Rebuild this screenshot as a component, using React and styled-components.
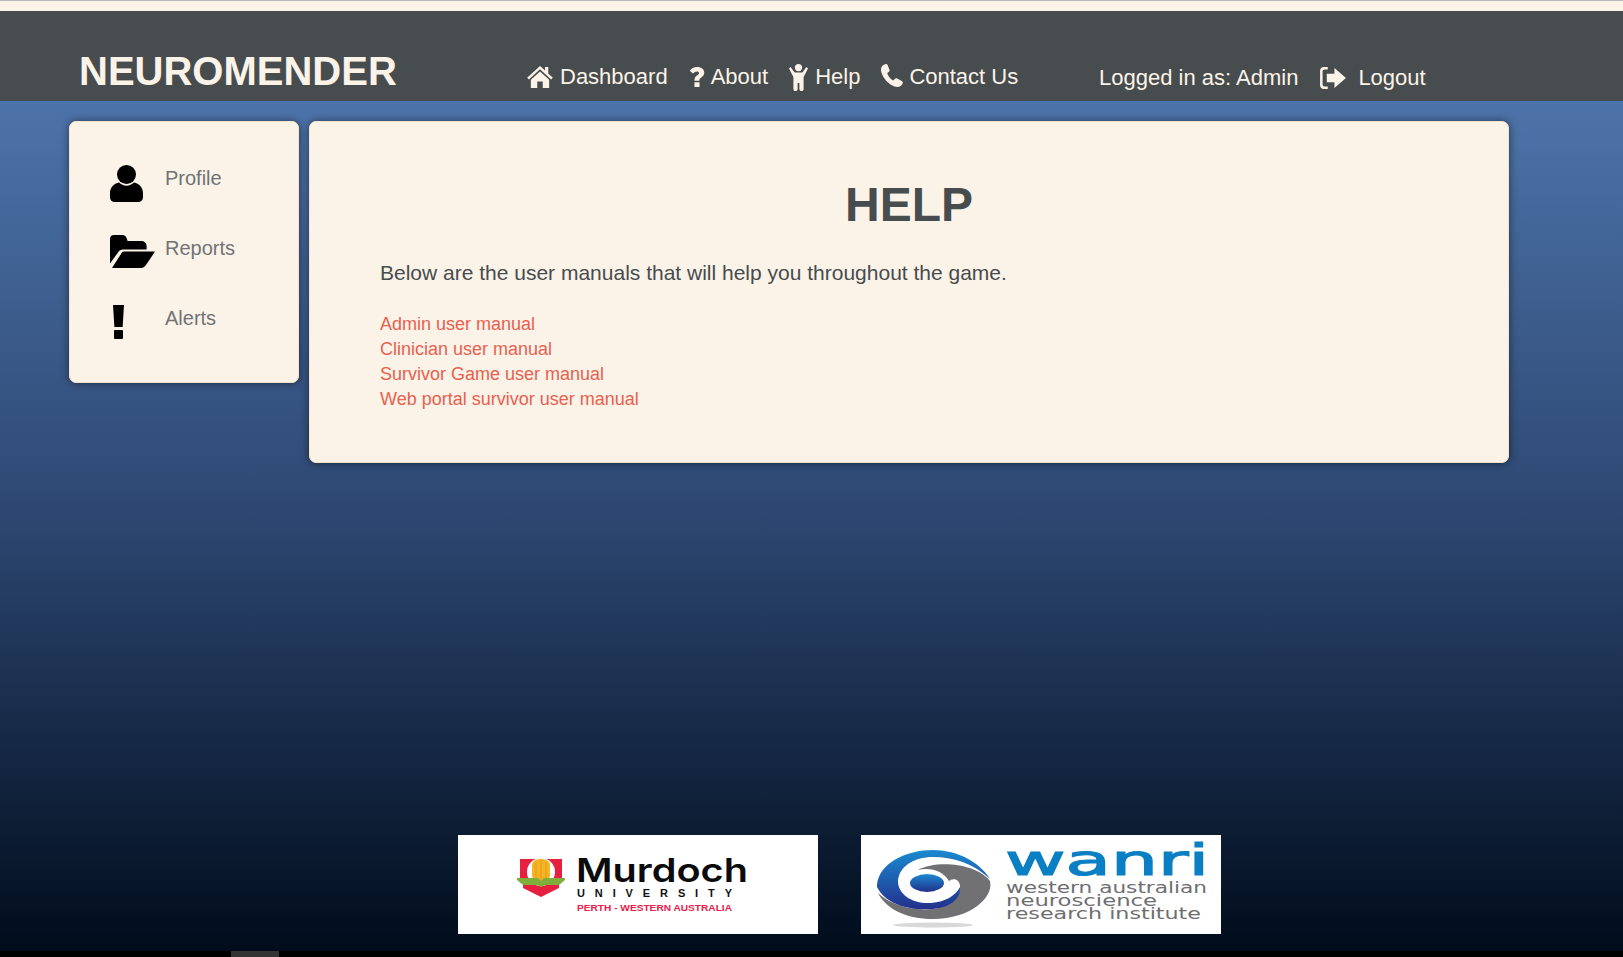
import React from "react";
import styled, { createGlobalStyle } from "styled-components";

const cream = "#fcf3e8";
const slate = "#474c4f";

const GlobalStyle = createGlobalStyle`
  html, body {
    margin: 0;
    padding: 0;
    background: #000;
  }
  body {
    font-family: "Liberation Sans", Arial, sans-serif;
  }
`;

const Page = styled.div`
  height: 957px;
  overflow: hidden;
  display: flex;
  flex-flow: column;
`;

const TopStrip = styled.div`
  height: 10px;
  flex: none;
  background: ${cream};
  border-top: 1px solid #b8b8b8;
`;

const Header = styled.header`
  height: 90px;
  flex: none;
  box-sizing: border-box;
  background: ${slate};
  color: ${cream};
  display: flex;
  align-items: flex-start;
  padding: 37px 0 0 79px;
`;

const Brand = styled.h1`
  width: 448px;
  margin: 0;
  font-size: 40px;
  line-height: 46px;
  font-weight: 700;
`;

const Nav = styled.nav`
  display: flex;
  width: 572px;
  padding-top: 16px;
`;

const NavLink = styled.a`
  display: flex;
  align-items: flex-start;
  gap: ${(p) => p.$gap}px;
  margin-right: ${(p) => p.$space}px;
  font-size: 22px;
  line-height: 25px;
  color: ${cream};
`;

const NavIcon = styled.span`
  margin-top: ${(p) => p.$top}px;
  line-height: 0;
`;

const Session = styled.div`
  display: flex;
  padding-top: 17px;
  font-size: 22px;
  line-height: 25px;
`;

const LogoutLink = styled.a`
  display: flex;
  gap: 12px;
  margin-left: 22px;
  color: ${cream};
`;

const Content = styled.main`
  flex: 1;
  display: flex;
  flex-flow: column;
  background: linear-gradient(180deg, #4d74aa 0%, #2c4670 50%, #000c1b 100%);
`;

const Columns = styled.div`
  display: flex;
  align-items: flex-start;
  gap: 10px;
  padding: 20px 0 0 69px;
`;

const Card = styled.section`
  box-sizing: border-box;
  background: ${cream};
  border: 1px solid #f9e2c8;
  border-radius: 7px;
  box-shadow: 0 0 8px rgba(0, 0, 0, 0.5);
`;

const Sidebar = styled(Card)`
  width: 230px;
  height: 262px;
  padding: 20px 0 0 40px;
`;

const SideItem = styled.a`
  display: flex;
  align-items: flex-start;
  height: 70px;
  font-size: 20px;
  line-height: 72px;
  color: #6f7377;
`;

const SideIcon = styled.span`
  width: 55px;
  flex: none;
  padding-top: 23px;
  line-height: 0;
`;

const MainCard = styled(Card)`
  width: 1200px;
  height: 342px;
  padding: 0 70px;
  color: ${slate};
`;

const Title = styled.h2`
  margin: 0;
  padding-top: 55px;
  font-size: 48px;
  line-height: 55px;
  font-weight: 700;
  text-align: center;
`;

const Intro = styled.p`
  margin: 0;
  padding-top: 29px;
  font-size: 21px;
  line-height: 24px;
`;

const Manuals = styled.ul`
  list-style: none;
  margin: 0;
  padding: 27px 0 0;
`;

const Manual = styled.li`
  font-size: 18px;
  line-height: 25px;
  color: #e9604f;
`;

const Footer = styled.footer`
  margin-top: auto;
  padding: 0 0 17px 458px;
  display: flex;
  gap: 43px;
`;

const LogoTile = styled.div`
  width: 360px;
  height: 99px;
  background: #fff;
  line-height: 0;
`;

const BottomBar = styled.div`
  height: 6px;
  flex: none;
  background: #000;
  padding-left: 231px;
`;

const BottomTab = styled.div`
  width: 48px;
  height: 6px;
  background: #333;
`;

const HomeIcon = () => (
  <svg width="26" height="22" viewBox="0 0 28 24" fill={cream}>
    <path d="M14 0 L19.5 5 V1 H23 V8.2 L28 12.8 L26.2 14.6 L14 3.6 L1.8 14.6 L0 12.8 Z" />
    <path d="M14 6 L24 15 V24 H17 V17 H11 V24 H4 V15 Z" />
  </svg>
);

const QuestionIcon = () => (
  <svg width="16" height="20" viewBox="0 0 16 22" fill={cream}>
    <path d="M8 0 C13 0 16 2.6 16 6.4 C16 9.4 14 10.7 12.4 11.8 C11 12.8 10.6 13.3 10.6 15 H5.2 C5.2 12 6.2 10.6 8 9.4 C9.4 8.4 10.2 7.9 10.2 6.7 C10.2 5.5 9.3 4.9 8 4.9 C6.4 4.9 5 5.8 3.6 7.2 L0 4 C2 1.4 4.6 0 8 0 Z" />
    <rect x="5.2" y="16.8" width="5.6" height="5.2" />
  </svg>
);

const PersonIcon = () => (
  <svg width="19" height="27" viewBox="0 0 19 27" fill={cream}>
    <circle cx="9.5" cy="3.6" r="3.6" />
    <path d="M1.6 3 L5.6 8.6 H13.4 L17.4 3 L19 4.4 L14.6 13 V25 C14.6 26.4 13.8 27 12.6 27 C11.4 27 10.4 26.4 10.4 25 V19 H8.6 V25 C8.6 26.4 7.6 27 6.4 27 C5.2 27 4.4 26.4 4.4 25 V13 L0 4.4 Z" />
  </svg>
);

const PhoneIcon = () => (
  <svg width="24" height="23" viewBox="0 0 24 25" fill={cream}>
    <path d="M5.4 0 C6.4 0 7 .6 7.4 1.6 L9.2 6.2 C9.6 7.2 9.2 8 8.4 8.6 L6.8 9.8 C7.4 12.6 10.4 16.6 13.4 18 L15 16.4 C15.8 15.6 16.6 15.4 17.6 15.8 L22.6 18.4 C23.6 19 24 19.8 23.6 20.8 C22.8 23.4 20.4 25 18 25 C9.4 24.6 0 13.4 0 6 C0 3.2 2 .6 4.4 .2 Z" />
  </svg>
);

const LogoutIcon = () => (
  <NavIcon $top={2}>
    <svg width="26" height="22" viewBox="0 0 27 23" fill={cream}>
      <path d="M8 0 V2.6 H4.6 C3.4 2.6 2.6 3.4 2.6 4.6 V18.4 C2.6 19.6 3.4 20.4 4.6 20.4 H8 V23 H4 C1.6 23 0 21.4 0 19 V4 C0 1.6 1.6 0 4 0 Z" />
      <path d="M15 1 L27 11.5 L15 22 V16 H7 V7 H15 Z" />
    </svg>
  </NavIcon>
);

const UserIcon = () => (
  <svg width="33" height="37" viewBox="0 0 33 37" fill="#000">
    <circle cx="16.5" cy="9.5" r="9.5" />
    <path d="M9 17.6 C11 19.6 13.6 20.8 16.5 20.8 C19.4 20.8 22 19.6 24 17.6 C29 18.6 33 22.6 33 28 V32 C33 35 31 37 28 37 H5 C2 37 0 35 0 32 V28 C0 22.6 4 18.6 9 17.6 Z" />
  </svg>
);

const FolderIcon = () => (
  <svg width="45" height="33" viewBox="0 0 45 33" fill="#000">
    <path d="M0 4 C0 1.6 1.6 0 4 0 H12 C15 0 16.6 1.6 17.6 6 H31 C34 6 36.6 8 36.6 11 V14.6 H13 C10.6 14.6 9.4 15.6 8 17.4 L0 28.6 Z" />
    <path d="M14 16.6 H45 L36 30 C34.6 32 33 33 31 33 H2 L11 19 C11.8 17.4 12.6 16.6 14 16.6 Z" />
  </svg>
);

const AlertIcon = () => (
  <svg width="14" height="34" viewBox="-3 0 14 34" fill="#000">
    <path d="M0 0 H11 L9.6 22 H1.4 Z" />
    <rect x="1" y="25" width="9" height="9" rx="1" />
  </svg>
);

const MurdochLogo = () => (
  <svg width="360" height="99" viewBox="0 0 360 99">
    <path d="M62 24 H104 V44 H62 Z" fill="#e8203f" />
    <path d="M65 50 H101 V53 L83 62 L65 53 Z" fill="#e8203f" />
    <circle cx="83" cy="37" r="14" fill="#fff" />
    <path d="M74 30 C74 22 92 22 92 30 V42 L83 48 L74 42 Z" fill="#f6b425" />
    <path d="M78 27 V44 M83 25 V46 M88 27 V44" stroke="#e39a1c" strokeWidth="1" />
    <path d="M59 43 H80 L83 46 L86 43 H107 V45 L101 50 H87 L83 52 L79 50 H65 L59 45 Z" fill="#7fae3c" />
    <text x="118" y="47" fontFamily="Inter, sans-serif" fontWeight="600" fontSize="33" textLength="172" lengthAdjust="spacingAndGlyphs" fill="#0b0b0b">Murdoch</text>
    <text x="119" y="62" fontFamily="Liberation Sans, sans-serif" fontWeight="700" fontSize="11" textLength="155" fill="#111">UNIVERSITY</text>
    <text x="119" y="76" fontFamily="Liberation Sans, sans-serif" fontWeight="700" fontSize="8.5" textLength="155" lengthAdjust="spacingAndGlyphs" fill="#e8204a">PERTH - WESTERN AUSTRALIA</text>
  </svg>
);

const WanriLogo = () => (
  <svg width="360" height="99" viewBox="0 0 360 99">
    <defs>
      <linearGradient id="swirl" x1="0" y1="0" x2="0" y2="1">
        <stop offset="0" stopColor="#1a8ad0" />
        <stop offset="1" stopColor="#23308c" />
      </linearGradient>
    </defs>
    <ellipse cx="72" cy="90" rx="40" ry="2.5" fill="#d8d8d8" />
    <path d="M57 35 C75 25 115 28 129 46 C133 62 110 84 72 84 C45 84 25 74 17 58 C30 70 50 76 72 74 C90 72 100 62 99 50 C97 42 90 44 88 46 C82 36 70 32 57 35 Z" fill="#717174" />
    <path d="M16 50 C18 28 45 15 72 15 C95 15 118 26 129 44 C112 28 92 22 72 22 C52 22 38 32 37 46 C37 60 52 69 70 68 C85 67 95 60 99 52 C100 62 92 72 72 74 C50 76 25 70 16 52 Z" fill="url(#swirl)" />
    <ellipse cx="66" cy="48" rx="17" ry="9" fill="url(#swirl)" />
    <text x="144" y="40" fontFamily="DejaVu Sans, sans-serif" fontSize="43" stroke="#0a7fc4" strokeWidth="1.2" textLength="204" lengthAdjust="spacingAndGlyphs" fill="#0a7fc4">wanri</text>
    <text x="145" y="58" fontFamily="DejaVu Sans, sans-serif" fontSize="16" textLength="201" lengthAdjust="spacingAndGlyphs" fill="#6e6e70">western australian</text>
    <text x="145" y="71" fontFamily="DejaVu Sans, sans-serif" fontSize="16" textLength="151" lengthAdjust="spacingAndGlyphs" fill="#6e6e70">neuroscience</text>
    <text x="145" y="84" fontFamily="DejaVu Sans, sans-serif" fontSize="16" textLength="195" lengthAdjust="spacingAndGlyphs" fill="#6e6e70">research institute</text>
  </svg>
);

const navLinks = [
  { label: "Dashboard", icon: <HomeIcon />, top: 2, gap: 7, space: 21 },
  { label: "About", icon: <QuestionIcon />, top: 3, gap: 6, space: 21 },
  { label: "Help", icon: <PersonIcon />, top: 0, gap: 7, space: 20 },
  { label: "Contact Us", icon: <PhoneIcon />, top: 0, gap: 5, space: 0 },
];

const sideLinks = [
  { label: "Profile", icon: <UserIcon /> },
  { label: "Reports", icon: <FolderIcon /> },
  { label: "Alerts", icon: <AlertIcon /> },
];

const manuals = [
  "Admin user manual",
  "Clinician user manual",
  "Survivor Game user manual",
  "Web portal survivor user manual",
];

export default function App() {
  return (
    <Page>
      <GlobalStyle />
      <TopStrip />
      <Header>
        <Brand>NEUROMENDER</Brand>
        <Nav>
          {navLinks.map((link) => (
            <NavLink key={link.label} $gap={link.gap} $space={link.space}>
              <NavIcon $top={link.top}>{link.icon}</NavIcon>
              {link.label}
            </NavLink>
          ))}
        </Nav>
        <Session>
          Logged in as: Admin
          <LogoutLink>
            <LogoutIcon />
            Logout
          </LogoutLink>
        </Session>
      </Header>
      <Content>
        <Columns>
          <Sidebar>
            {sideLinks.map((link) => (
              <SideItem key={link.label}>
                <SideIcon>{link.icon}</SideIcon>
                {link.label}
              </SideItem>
            ))}
          </Sidebar>
          <MainCard>
            <Title>HELP</Title>
            <Intro>Below are the user manuals that will help you throughout the game.</Intro>
            <Manuals>
              {manuals.map((name) => (
                <Manual key={name}>{name}</Manual>
              ))}
            </Manuals>
          </MainCard>
        </Columns>
        <Footer>
          <LogoTile><MurdochLogo /></LogoTile>
          <LogoTile><WanriLogo /></LogoTile>
        </Footer>
      </Content>
      <BottomBar>
        <BottomTab />
      </BottomBar>
    </Page>
  );
}
